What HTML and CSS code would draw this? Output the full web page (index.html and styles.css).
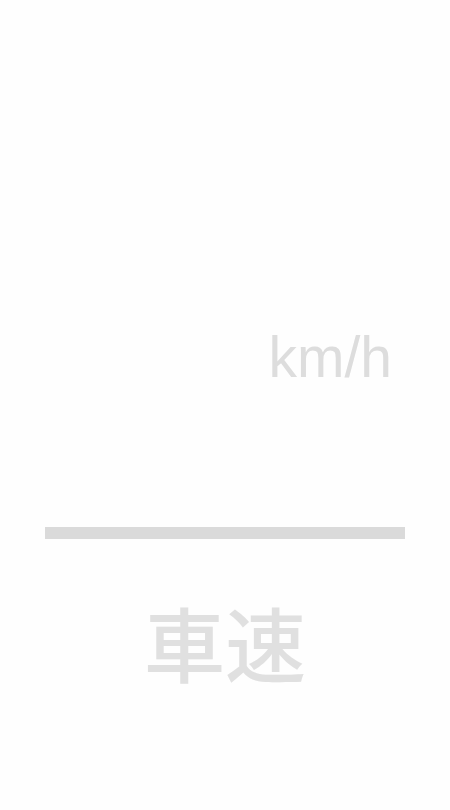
FILE: index.html
```html
<!DOCTYPE html>
<html lang="ja">
<head>
<meta charset="utf-8">
<link rel="stylesheet" href="styles.css">
</head>
<body>
<div class="screen">
  <div class="speed">
    <span class="value"></span>
    <span class="unit">km/h</span>
  </div>
  <div class="bar"></div>
  <div class="label">車速</div>
</div>
</body>
</html>
```
FILE: styles.css
```css
html, body {
  margin: 0;
  padding: 0;
  background: #fefefe;
}
.screen {
  width: 450px;
  height: 810px;
  display: flex;
  flex-direction: column;
  box-sizing: border-box;
  padding: 0 45px;
  font-family: "Liberation Sans", Arial, "Noto Sans CJK JP", sans-serif;
}
.speed {
  height: 396px;
  display: flex;
  justify-content: flex-end;
  align-items: flex-end;
  padding-right: 13px;
}
.unit {
  font-size: 57px;
  line-height: 57px;
  color: #dddddd;
  padding-bottom: 10px;
}
.bar {
  margin-top: 131px;
  height: 12px;
  background: #dadada;
}
.label {
  margin-top: 54px;
  text-align: center;
  font-family: "Noto Sans CJK JP", sans-serif;
  font-weight: 500;
  font-size: 81px;
  line-height: 96px;
  color: #e0e0e0;
}
```
